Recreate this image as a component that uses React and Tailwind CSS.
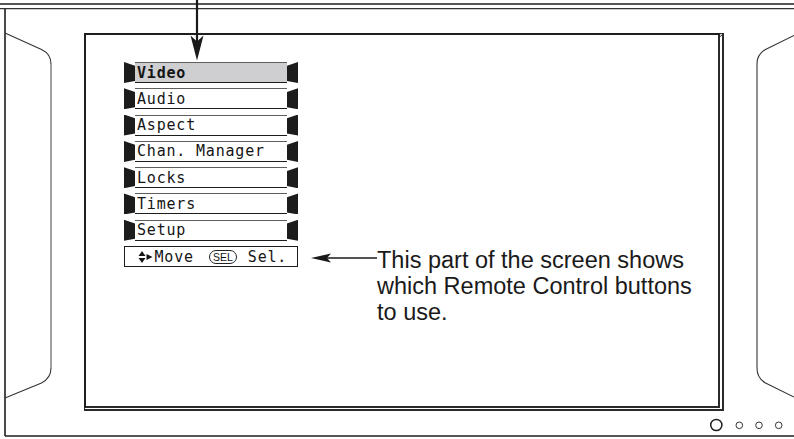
import React from "react";

const items = ["Video", "Audio", "Aspect", "Chan. Manager", "Locks", "Timers", "Setup"];

function MenuRow({ label, active }) {
  return (
    <div className="flex h-[21px] w-[174px]">
      <div className="w-[11px] h-full bg-[#1c1c1c] [clip-path:polygon(0_0,100%_18%,100%_90%,0_100%)]" />
      <div
        className={
          active
            ? "flex-1 flex items-center pl-[2px] pt-[1px] border-t-[1.5px] border-t-[#5e5e5e] border-b-[1.5px] border-b-[#1c1c1c] bg-[#cfcfd1]"
            : "flex-1 flex items-center pl-[2px] pt-[1px] border-t-[1.5px] border-t-[#5e5e5e] border-b-[1.5px] border-b-[#1c1c1c] bg-white"
        }
      >
        <span
          className={
            active
              ? "[font-family:'DejaVu_Sans_Mono',monospace] text-[15px] tracking-[0.8px] leading-none font-bold text-[#151515]"
              : "[font-family:'DejaVu_Sans_Mono',monospace] text-[15px] tracking-[0.8px] leading-none text-[#151515]"
          }
        >
          {label}
        </span>
      </div>
      <div className="w-[11px] h-full bg-[#1c1c1c] [clip-path:polygon(0_18%,100%_0,100%_100%,0_90%)]" />
    </div>
  );
}

function MoveBox() {
  return (
    <div className="flex items-center h-[21px] w-[174px] pt-[1px] border-[1.5px] border-[#1c1c1c] bg-white pl-[12.5px] text-[#151515]">
      <svg width="15" height="14" viewBox="0 0 15 14" className="shrink-0">
        <path d="M0.5 6 L4 1 L7.5 6 Z" fill="#151515" />
        <path d="M0.5 8 L4 13 L7.5 8 Z" fill="#151515" />
        <path d="M8.5 4 L14.5 7 L8.5 10 Z" fill="#151515" />
      </svg>
      <span className="ml-[2px] [font-family:'DejaVu_Sans_Mono',monospace] text-[15px] tracking-[0.8px] leading-none">
        Move
      </span>
      <span className="ml-[15px] flex items-center justify-center h-[14px] w-[28px] rounded-[7px] border border-[#222] [font-family:'Liberation_Sans',Arial,sans-serif] text-[10.5px] leading-none">
        SEL
      </span>
      <span className="ml-[11px] [font-family:'DejaVu_Sans_Mono',monospace] text-[15px] tracking-[0.8px] leading-none">
        Sel.
      </span>
    </div>
  );
}

export default function App() {
  return (
    <div className="relative w-[794px] h-[439px] overflow-hidden bg-white pt-[33px] pl-[84px]">
      <div className="w-[640px] h-[378px] border-t-2 border-l-2 border-r-[6px] border-b-[5px] border-t-[#1e1e1e] border-l-[#1e1e1e] border-r-[#2a2a2a] border-b-[#2a2a2a] [border-right-style:double] [border-bottom-style:double] pl-[38px] pt-[27px]">
        <div className="flex flex-col gap-[5.3px]">
          {items.map((it, i) => (
            <MenuRow key={it} label={it} active={i === 0} />
          ))}
          <div className="flex items-start">
            <MoveBox />
            <svg width="66" height="12" viewBox="0 0 66 12" className="ml-[13px] mt-[6px] shrink-0">
              <path d="M0 6 L20 1.5 L16 6 L20 10.5 Z" fill="#1a1a1a" />
              <line x1="16" y1="6" x2="66" y2="6" stroke="#1a1a1a" strokeWidth="1.6" />
            </svg>
            <p className="mt-[1px] [font-family:'Liberation_Sans',Arial,sans-serif] text-[23.5px] leading-[26px] text-[#1a1a1a] whitespace-nowrap">
              This part of the screen shows
              <br />
              which Remote Control buttons
              <br />
              to use.
            </p>
          </div>
        </div>
      </div>

      <svg
        className="absolute inset-0 pointer-events-none"
        width="794"
        height="439"
        viewBox="0 0 794 439"
      >
        {/* outer frame */}
        <line x1="0" y1="4" x2="794" y2="4" stroke="#1e1e1e" strokeWidth="1.6" />
        <line x1="0" y1="8.7" x2="794" y2="8.7" stroke="#333" strokeWidth="1.3" />
        <line x1="5" y1="8.7" x2="5" y2="436" stroke="#1e1e1e" strokeWidth="1.6" />
        <line x1="5" y1="436" x2="794" y2="436" stroke="#1e1e1e" strokeWidth="1.6" />

        {/* left side panel */}
        <path d="M5 33 L41.5 49.5 Q51 54 51 64" fill="none" stroke="#333" strokeWidth="1.1" />
        <line x1="51" y1="64" x2="51" y2="368" stroke="#8a8a8a" strokeWidth="1.6" />
        <path d="M51 368 Q51 378 41.5 383 L5 398" fill="none" stroke="#333" strokeWidth="1.1" />

        {/* right side panel */}
        <path d="M794 35.5 L765.5 49.5 Q757 54 757 64" fill="none" stroke="#333" strokeWidth="1.1" />
        <line x1="757" y1="64" x2="757" y2="368" stroke="#555" strokeWidth="1.3" />
        <path d="M757 368 Q757 378 765.5 383 L794 397" fill="none" stroke="#333" strokeWidth="1.1" />

        {/* buttons */}
        <circle cx="716.3" cy="425" r="5.6" fill="none" stroke="#1e1e1e" strokeWidth="1.5" />
        <circle cx="739.3" cy="425.3" r="3.3" fill="none" stroke="#333" strokeWidth="1" />
        <circle cx="759" cy="425.3" r="3.3" fill="none" stroke="#333" strokeWidth="1" />
        <circle cx="778.7" cy="425.3" r="3.3" fill="none" stroke="#333" strokeWidth="1" />

        {/* screen corner bevel */}
        <line x1="718.5" y1="38" x2="723.5" y2="33.5" stroke="#2a2a2a" strokeWidth="1" />

        {/* down arrow */}
        <line x1="197" y1="0" x2="197" y2="44" stroke="#1a1a1a" strokeWidth="2.2" />
        <path d="M197 60.5 L190.5 35.5 L197 41.5 L203.5 35.5 Z" fill="#1a1a1a" />
      </svg>
    </div>
  );
}
